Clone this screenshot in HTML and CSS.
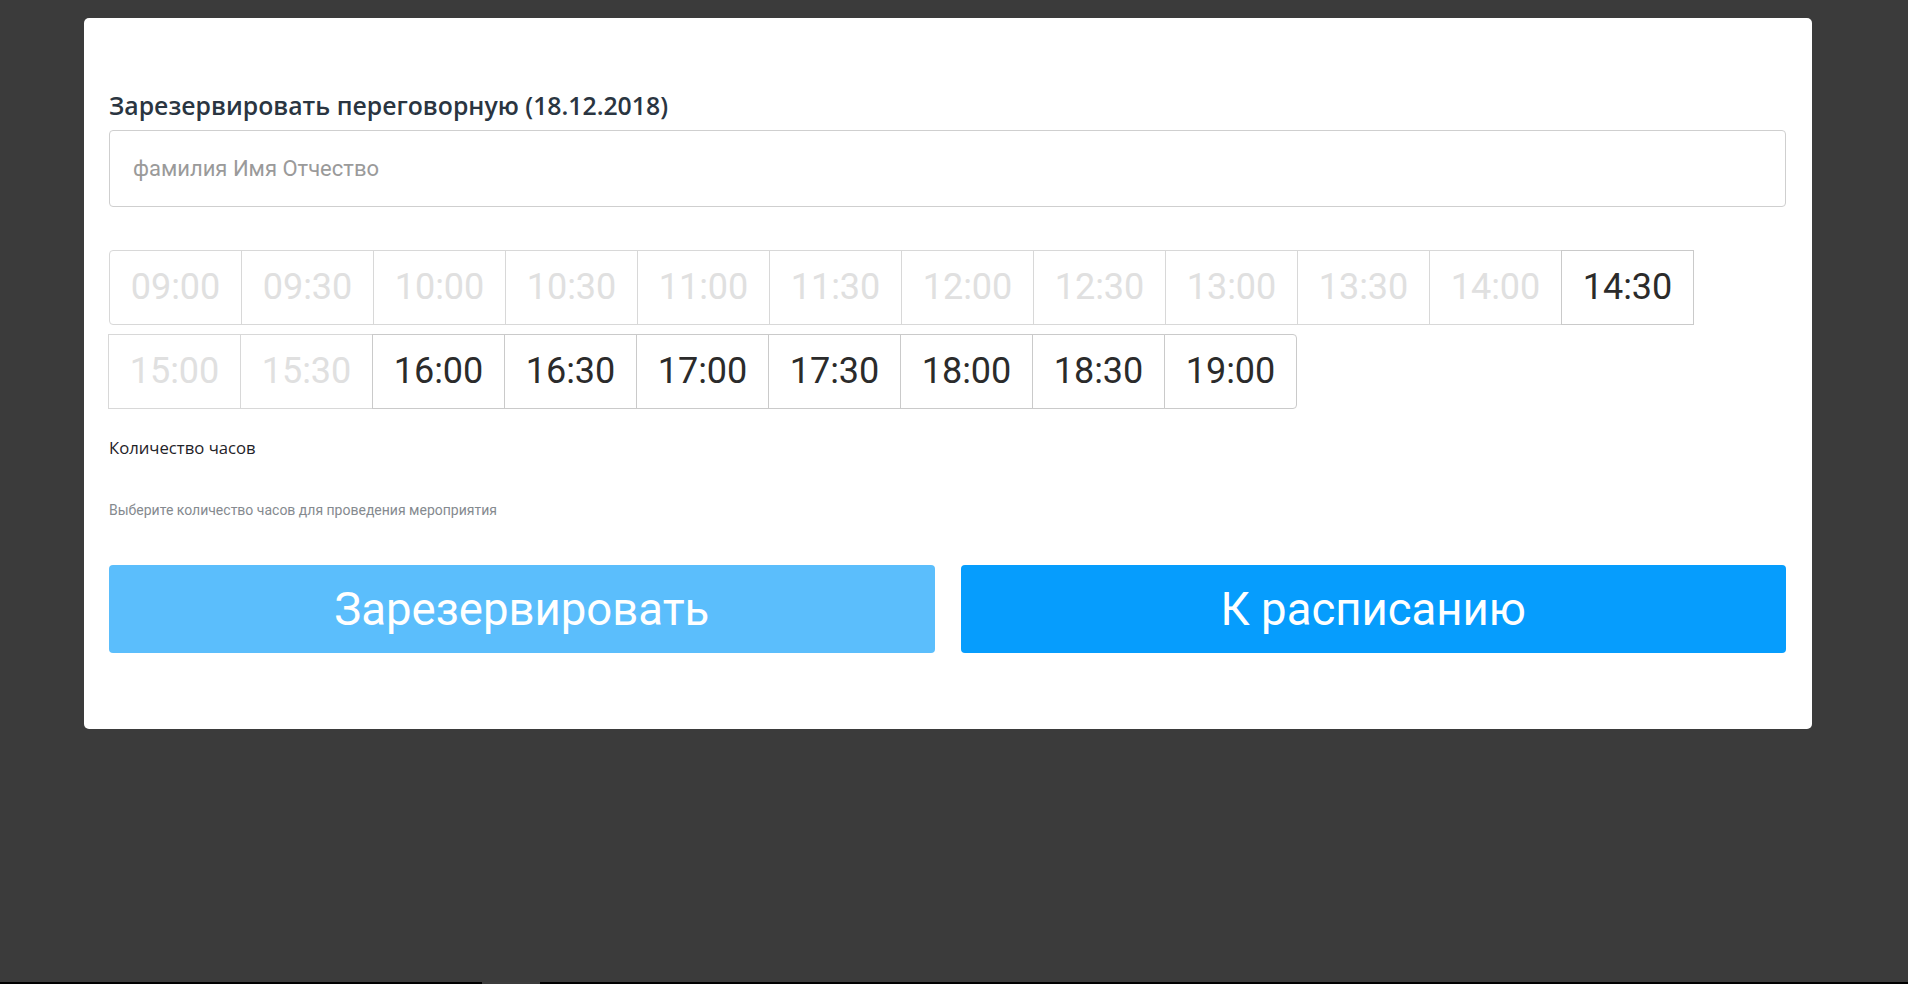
FILE: index.html
```html
<!DOCTYPE html>
<html lang="ru">
<head>
<meta charset="utf-8">
<title>Зарезервировать переговорную</title>
<link rel="stylesheet" href="styles.css">
</head>
<body>
<div class="stage">
  <div class="card">
    <h2 class="title">Зарезервировать переговорную (18.12.2018)</h2>
    <input class="name-input" type="text" placeholder="фамилия Имя Отчество">
    <div class="slots">
      <button class="slot disabled">09:00</button>
      <button class="slot disabled">09:30</button>
      <button class="slot disabled">10:00</button>
      <button class="slot disabled">10:30</button>
      <button class="slot disabled">11:00</button>
      <button class="slot disabled">11:30</button>
      <button class="slot disabled">12:00</button>
      <button class="slot disabled">12:30</button>
      <button class="slot disabled">13:00</button>
      <button class="slot disabled">13:30</button>
      <button class="slot disabled">14:00</button>
      <button class="slot">14:30</button>
      <button class="slot disabled row-start">15:00</button>
      <button class="slot disabled">15:30</button>
      <button class="slot">16:00</button>
      <button class="slot">16:30</button>
      <button class="slot">17:00</button>
      <button class="slot">17:30</button>
      <button class="slot">18:00</button>
      <button class="slot">18:30</button>
      <button class="slot last">19:00</button>
    </div>
    <div class="hours-label">Количество часов</div>
    <div class="hours-help">Выберите количество часов для проведения мероприятия</div>
    <div class="actions">
      <button class="btn btn-reserve">Зарезервировать</button>
      <button class="btn btn-schedule">К расписанию</button>
    </div>
  </div>
</div>
<div class="bottom-bar"><div class="bottom-thumb"></div></div>
</body>
</html>
```

FILE: styles.css
```css
* {
  box-sizing: border-box;
}

html, body {
  margin: 0;
  padding: 0;
}

body {
  height: 984px;
  background: #3b3b3b;
  font-family: Roboto, "Liberation Sans", Arial, sans-serif;
  display: flex;
  flex-direction: column;
  overflow: hidden;
}

.stage {
  flex: 1;
  padding: 18px 0 0 84px;
}

.card {
  width: 1728px;
  height: 711px;
  background: #ffffff;
  border-radius: 5px;
  padding: 74px 26px 0 25px;
}

.title {
  margin: 0;
  font-family: "Open Sans", Roboto, sans-serif;
  font-size: 24.8px;
  line-height: 27px;
  font-weight: 600;
  color: #2a3541;
}

.name-input {
  display: block;
  width: 100%;
  height: 77px;
  margin-top: 11px;
  border: 1px solid #cfcfcf;
  border-radius: 4px;
  padding: 0 23px;
  font-family: Roboto, "Liberation Sans", Arial, sans-serif;
  font-size: 22px;
  color: #333;
  outline: none;
}

.name-input::placeholder {
  color: #9a9a9a;
}

.slots {
  display: flex;
  flex-wrap: wrap;
  row-gap: 9px;
  margin-top: 43px;
  width: 1590px;
}

.slot {
  width: 133px;
  height: 75px;
  margin: 0 0 0 -1px;
  padding: 0;
  background: #fff;
  border: 1px solid #cacaca;
  border-radius: 0;
  font-family: Roboto, "Liberation Sans", Arial, sans-serif;
  font-size: 36px;
  font-weight: 400;
  color: #2b2b2b;
  line-height: 73px;
  text-align: center;
}

.slot:first-child {
  margin-left: 0;
  border-radius: 4px 0 0 4px;
}

.slot.disabled {
  color: #e0e0e0;
  border-color: #d8d8d8;
}

.slot.row-start {
  margin-left: -1px;
}

.slot.last {
  border-radius: 0 4px 4px 0;
}

.hours-label {
  margin-top: 29px;
  font-family: "Open Sans", Roboto, sans-serif;
  font-size: 16.7px;
  line-height: 20px;
  font-weight: 500;
  color: #1f2328;
}

.hours-help {
  margin-top: 44px;
  font-size: 14px;
  line-height: 16px;
  color: #858a8f;
}

.actions {
  display: flex;
  gap: 26px;
  margin-top: 47px;
}

.btn {
  flex: 1;
  height: 88px;
  border: none;
  border-radius: 4px;
  font-family: Roboto, "Liberation Sans", Arial, sans-serif;
  font-size: 45.5px;
  font-weight: 400;
  color: #ffffff;
  padding: 0;
}

.btn-reserve {
  background: #5bbefc;
}

.btn-schedule {
  background: #069dfd;
}

.bottom-bar {
  height: 2px;
  background: #000;
}

.bottom-thumb {
  width: 58px;
  height: 2px;
  margin-left: 482px;
  background: #3c3c3c;
}
```
